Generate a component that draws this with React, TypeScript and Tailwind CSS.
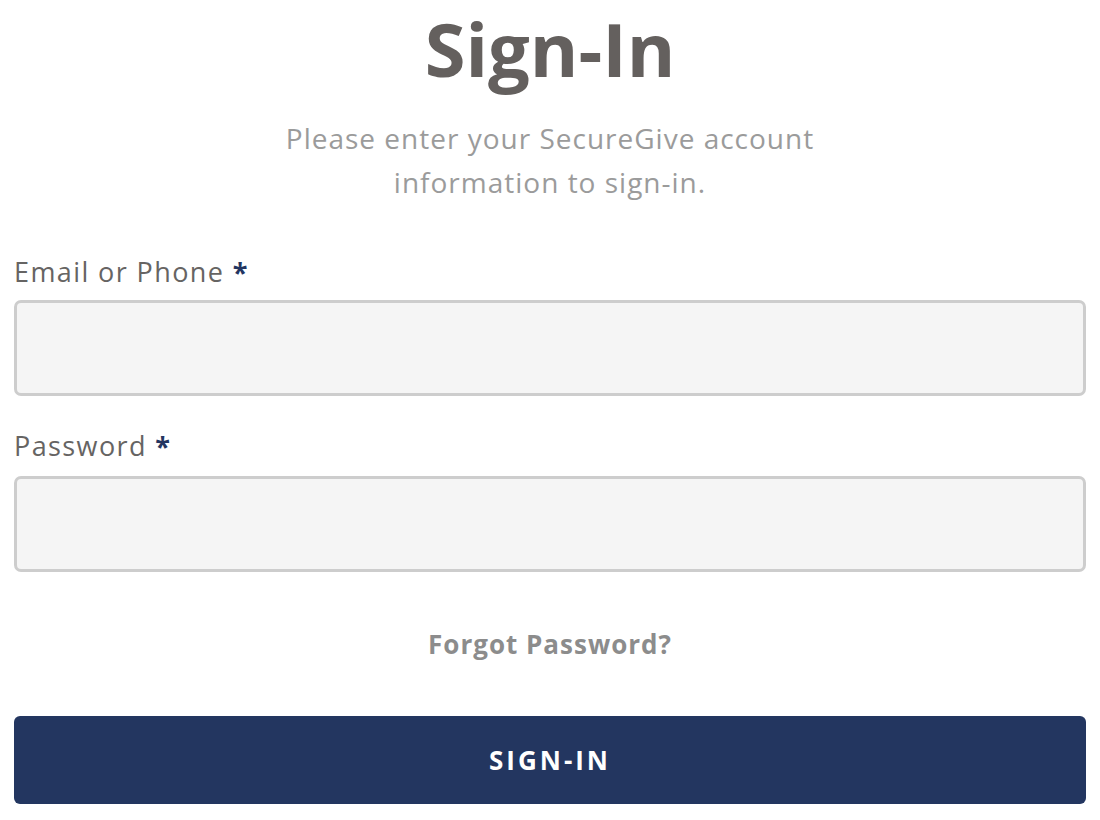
export default function App() {
  const font = { fontFamily: '"Open Sans", "Noto Sans", sans-serif' };

  return (
    <div className="min-h-screen bg-white px-[14px]" style={font}>
      <div className="pt-[0px]">
        <h1 className="text-center text-[74px] font-bold leading-[98px] text-[#64605e]">Sign-In</h1>
        <p className="mx-auto mt-[18px] max-w-[620px] text-center text-[28px] leading-[44px] tracking-[1px] text-[#9b9b9b]">
          Please enter your SecureGive account information to sign-in.
        </p>
      </div>

      <form className="mt-[50px]" onSubmit={(e) => e.preventDefault()}>
        <label className="block text-[27px] leading-[36px] tracking-[1.4px] text-[#666463]">
          Email or Phone <span className="font-bold text-[#233561]">*</span>
        </label>
        <input
          type="text"
          className="mt-[10px] block h-[96px] w-full rounded-[7px] border-[3px] border-[#cdcdcd] bg-[#f5f5f5] px-4 text-[26px] outline-none"
        />

        <label className="mt-[32px] block text-[27px] leading-[36px] tracking-[1.4px] text-[#666463]">
          Password <span className="font-bold text-[#233561]">*</span>
        </label>
        <input
          type="password"
          className="mt-[12px] block h-[96px] w-full rounded-[7px] border-[3px] border-[#cdcdcd] bg-[#f5f5f5] px-4 text-[26px] outline-none"
        />

        <div className="mt-[54px] text-center">
          <a href="#" className="text-[26px] font-bold leading-[36px] tracking-[1px] text-[#8c8c8c]">
            Forgot Password?
          </a>
        </div>

        <button
          type="submit"
          className="mt-[54px] block h-[88px] w-full rounded-[6px] bg-[#233660] text-[26px] font-bold tracking-[3px] text-white"
        >
          SIGN-IN
        </button>
      </form>
    </div>
  );
}
